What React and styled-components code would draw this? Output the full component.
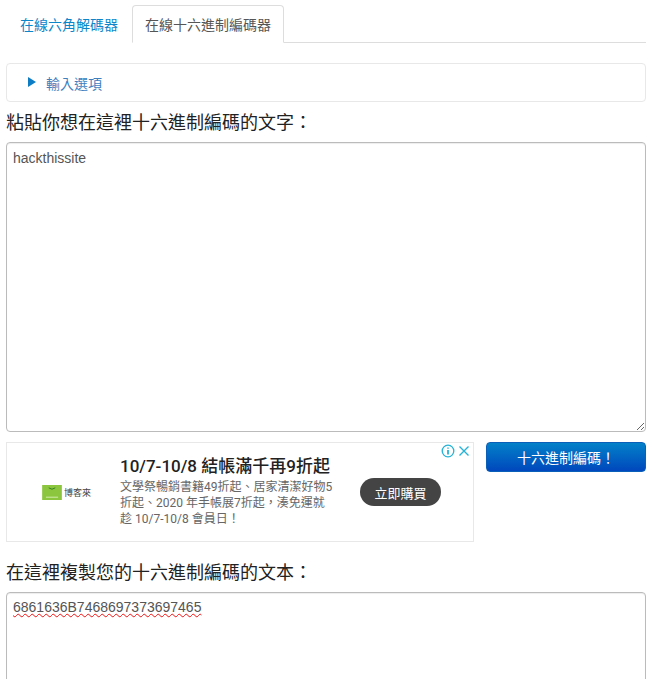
import React from "react";
import styled, { createGlobalStyle } from "styled-components";

const Global = createGlobalStyle`
  html, body { margin: 0; padding: 0; height: 679px; overflow: hidden; background: #fff; }
  body { font-family: "Liberation Sans", "Noto Sans CJK TC", sans-serif; font-size: 14px; color: #555; }
  * { box-sizing: border-box; }
`;

const Page = styled.div`
  padding: 5px 5px 0 6px;
  display: flex;
  flex-direction: column;
`;

const Tabs = styled.nav`
  display: flex;
  height: 38px;
  border-bottom: 1px solid #ddd;
`;

const Tab = styled.a`
  display: flex;
  align-items: center;
  justify-content: center;
  height: 38px;
  width: ${(p) => p.$width}px;
  font-size: 14px;
  color: ${(p) => (p.$active ? "#555" : "#0d86c9")};
  background: #fff;
  border: 1px solid ${(p) => (p.$active ? "#ddd" : "transparent")};
  border-bottom-color: ${(p) => (p.$active ? "#fff" : "transparent")};
  border-radius: 4px 4px 0 0;
`;

const Options = styled.div`
  margin-top: 20px;
  height: 39px;
  display: flex;
  align-items: center;
  gap: 10px;
  padding-left: 21px;
  border: 1px solid #e8e8e8;
  border-radius: 4px;
  color: #3f7fbf;
  font-size: 14px;
`;

const Triangle = styled.span`
  width: 0;
  height: 0;
  border-left: 8px solid #0d7cc4;
  border-top: 5px solid transparent;
  border-bottom: 5px solid transparent;
  margin-top: -1px;
`;

const Heading = styled.h2`
  margin: ${(p) => p.$top}px 0 8px;
  height: 22px;
  line-height: 22px;
  font-family: "Liberation Serif", "Noto Sans CJK TC", serif;
  font-size: 18px;
  font-weight: 400;
  color: #222;
`;

const Input = styled.textarea`
  display: block;
  width: 100%;
  height: 290px;
  padding: 6px;
  border: 1px solid #bbb;
  border-radius: 4px;
  box-shadow: inset 0 1px 1px rgba(0, 0, 0, 0.075);
  font-family: "Liberation Sans", sans-serif;
  font-size: 14px;
  line-height: 18px;
  color: #555;
  outline: none;
`;

const Output = styled.div`
  height: 200px;
  padding: 5px 6px;
  border: 1px solid #bbb;
  border-radius: 4px;
  box-shadow: inset 0 1px 1px rgba(0, 0, 0, 0.075);
  font-size: 14px;
  line-height: 18px;
  color: #555;
`;

const Misspelled = styled.span`
  text-decoration: underline wavy #e11;
  text-decoration-thickness: 1px;
  text-underline-offset: 1px;
`;

const Row = styled.div`
  margin-top: 10px;
  display: flex;
  align-items: flex-start;
  justify-content: space-between;
`;

const Ad = styled.aside`
  position: relative;
  width: 468px;
  height: 100px;
  display: grid;
  grid-template-columns: 113px 213px 1fr;
  border: 1px solid #e8e8e8;
  background: #fff;
`;

const Brand = styled.div`
  display: flex;
  align-items: center;
  gap: 2px;
  font-size: 9px;
  color: #444;
  padding-left: 35px;
  padding-top: 1px;
`;

const AdCopy = styled.div`
  padding-top: 13px;
`;

const AdTitle = styled.div`
  font-family: "Roboto", "Noto Sans CJK TC", sans-serif;
  font-size: 17px;
  font-weight: 500;
  line-height: 20px;
  color: #222;
  white-space: nowrap;
`;

const AdBody = styled.div`
  margin-top: 3px;
  font-family: "Roboto", "Noto Sans CJK TC", sans-serif;
  font-size: 12px;
  line-height: 16px;
  color: #666;
`;

const AdAction = styled.div`
  display: flex;
  align-items: center;
  padding-left: 27px;
`;

const Buy = styled.span`
  display: flex;
  align-items: center;
  justify-content: center;
  width: 81px;
  height: 28px;
  border-radius: 14px;
  background: #444;
  color: #fff;
  font-size: 13px;
`;

const AdMarks = styled.div`
  position: absolute;
  top: 1px;
  right: 2px;
  display: flex;
  gap: 2px;
`;

const Encode = styled.button`
  width: 160px;
  height: 30px;
  border: 1px solid #0a5fb8;
  border-radius: 4px;
  background: linear-gradient(#0381c8, #0047bd);
  color: #fff;
  font-family: inherit;
  font-size: 14px;
  padding: 0;
`;

const BagLogo = () => (
  <svg width="20" height="15" viewBox="0 0 21 16">
    <rect width="21" height="16" fill="#8cc63f" />
    <path d="M7 3q3.500 3 7 0" stroke="#2f7d1f" strokeWidth="1" fill="none" />
    <rect x="4" y="12.500" width="13" height="1" fill="#d6ecb0" />
  </svg>
);

const InfoIcon = () => (
  <svg width="14" height="14" viewBox="0 0 14 14" fill="none" stroke="#26b3d6">
    <circle cx="7" cy="7" r="5.800" strokeWidth="1.300" />
    <path d="M7 6v4.500" strokeWidth="1.800" />
    <path d="M7 3.500v1.300" strokeWidth="1.500" />
  </svg>
);

const CloseIcon = () => (
  <svg width="14" height="14" viewBox="0 0 14 14" fill="none" stroke="#26b3d6" strokeWidth="1.400">
    <path d="M2.500 2.500l9 9M11.500 2.500l-9 9" />
  </svg>
);

export default function App() {
  return (
    <Page>
      <Global />
      <Tabs>
        <Tab $width={126}>在線六角解碼器</Tab>
        <Tab $width={152} $active>在線十六進制編碼器</Tab>
      </Tabs>
      <Options>
        <Triangle />
        輸入選項
      </Options>
      <Heading $top={10}>粘貼你想在這裡十六進制編碼的文字：</Heading>
      <Input defaultValue="hackthissite" spellCheck={false} />
      <Row>
        <Ad>
          <Brand>
            <BagLogo />
            博客來
          </Brand>
          <AdCopy>
            <AdTitle>10/7-10/8 結帳滿千再9折起</AdTitle>
            <AdBody>文學祭暢銷書籍49折起、居家清潔好物5折起、2020 年手帳展7折起，湊免運就趁 10/7-10/8 會員日！</AdBody>
          </AdCopy>
          <AdAction>
            <Buy>立即購買</Buy>
          </AdAction>
          <AdMarks>
            <InfoIcon />
            <CloseIcon />
          </AdMarks>
        </Ad>
        <Encode>十六進制編碼！</Encode>
      </Row>
      <Heading $top={20}>在這裡複製您的十六進制編碼的文本：</Heading>
      <Output>
        <Misspelled>6861636B7468697373697465</Misspelled>
      </Output>
    </Page>
  );
}
